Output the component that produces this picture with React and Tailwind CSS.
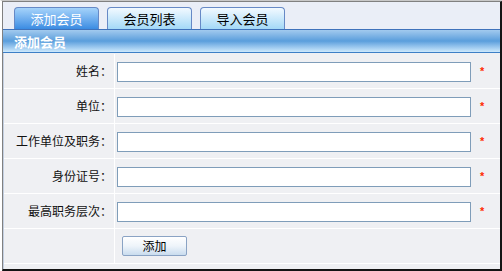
import React from "react";

const fields = ["姓名：", "单位：", "工作单位及职务：", "身份证号：", "最高职务层次："];

function Tab({ label, active }) {
  return (
    <div
      className={
        "w-[85px] h-[22px] rounded-t-[4px] border border-b-0 border-[#6689c6] flex items-center justify-center text-[13px] leading-none " +
        (active
          ? "bg-gradient-to-b from-[#a5d3fa] to-[#3a8ce2] text-white"
          : "bg-gradient-to-b from-[#f2f9ff] to-[#a3d9f7] text-black")
      }
    >
      {label}
    </div>
  );
}

export default function App() {
  return (
    <div className="w-[502px] h-[271px] bg-white font-['Noto_Sans_CJK_SC','Noto_Sans',sans-serif]">
      <div className="w-[502px] h-[271px] border-t border-l-2 border-t-[#c8c8c8] border-l-white">
        <div className="h-[270px] border-t border-l border-[#808080] border-r-2 border-b-2 border-r-[#141414] border-b-[#141414] bg-[#eaeef7] flex flex-col">
          {/* tabs */}
          <div className="h-[27px] flex items-end gap-[8px] pl-[11px]">
            <Tab label="添加会员" active />
            <Tab label="会员列表" />
            <Tab label="导入会员" />
          </div>
          {/* header bar */}
          <div className="h-[24px] border-t border-b border-t-[#3f72bb] border-b-[#3d7fc6] bg-gradient-to-b from-[#a2caee] via-[#5a9edc] to-[#cde9fc] flex items-center pl-[11px]">
            <span className="text-white font-bold text-[13px] leading-none">添加会员</span>
          </div>
          {/* form rows */}
          <div className="flex-1 border-l border-[#c4d0e2] bg-[#eff0f3] pt-px">
            {fields.map((f) => (
              <div key={f} className="h-[35px] flex border-b border-white">
                <div className="w-[110px] flex items-center justify-end pr-[2px] text-[12px] text-[#111]">
                  {f}
                </div>
                <div className="w-px bg-white" />
                <div className="flex-1 flex items-center pl-[2px] pt-px">
                  <input className="w-[354px] h-[20px] border border-[#7f9db9] bg-white outline-none" />
                  <span className="ml-[9px] text-[#ff2a00] font-bold text-[11px] leading-none font-['Liberation_Sans',sans-serif] -mt-[1px]">*</span>
                </div>
              </div>
            ))}
            <div className="h-[35px] flex border-b border-white">
              <div className="w-[110px]" />
              <div className="w-px bg-white" />
              <div className="flex-1 flex items-center pl-[7px]">
                <button className="w-[65px] h-[20px] border border-[#8aa3c4] rounded-[2px] bg-gradient-to-b from-[#ffffff] via-[#eef4fa] to-[#c9dcee] text-[12px] leading-none text-black flex items-center justify-center">
                  添加
                </button>
              </div>
            </div>
          </div>
        </div>
      </div>
    </div>
  );
}
